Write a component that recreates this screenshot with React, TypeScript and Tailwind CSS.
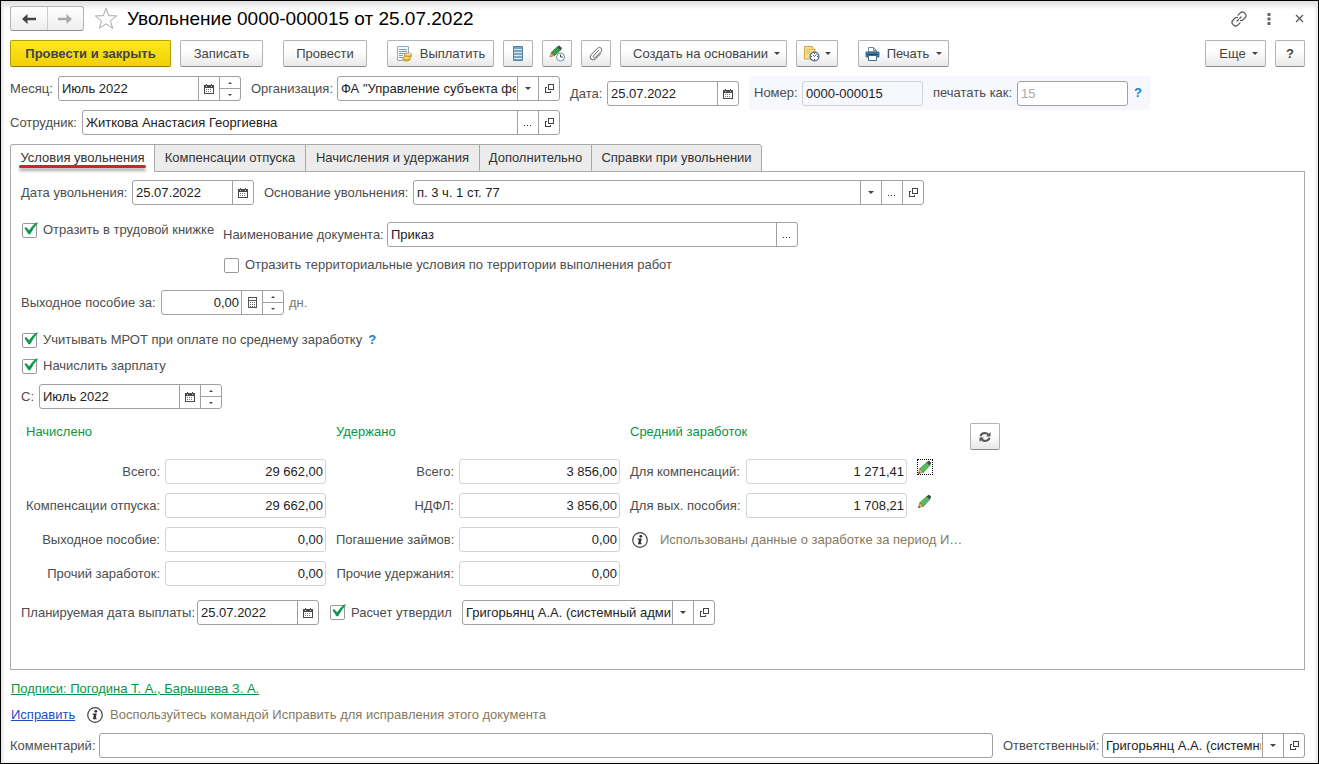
import React from "react";

type Addon = "calendar" | "calc" | "spin" | "drop" | "dots" | "open";

function CalendarIcon() {
  return (
    <svg width="10" height="10" viewBox="0 0 10 10" shapeRendering="crispEdges" aria-hidden="true">
      <path d="M0 1h10v9H0z M1 4v5h8V4z" fill="#4a4a4a" fillRule="evenodd" />
      <path d="M2 0h1v1H2zM7 0h1v1H7z" fill="#4a4a4a" />
      <path d="M2 2h1v1H2zM7 2h1v1H7z" fill="#ccc" />
      <path d="M2 5h1v1H2zM4 5h1v1H4zM6 5h1v1H6zM2 7h1v1H2zM4 7h1v1H4zM6 7h1v1H6z" fill="#777" />
    </svg>
  );
}

function CalcIcon() {
  return (
    <svg width="9" height="11" viewBox="0 0 9 11" shapeRendering="crispEdges" aria-hidden="true">
      <path d="M0 0h9v11H0z M1 1v2h7V1zM1 4v6h7V4z" fill="#555" fillRule="evenodd" />
      <path d="M2 5h1v1H2zM4 5h1v1H4zM6 5h1v1H6zM2 7h1v1H2zM4 7h1v1H4zM6 7h1v1H6zM2 9h1v1H2zM4 9h1v1H4zM6 9h1v1H6z" fill="#666" />
    </svg>
  );
}

function OpenIcon() {
  return (
    <svg width="9" height="9" viewBox="0 0 9 9" fill="none" stroke="#444" shapeRendering="crispEdges" aria-hidden="true">
      <path d="M3.500 0.500h5v5h-5z M2 3.500H0.500v5h5V7" />
    </svg>
  );
}

function Caret() {
  return (
    <svg width="6" height="3" viewBox="0 0 6 3" className="shrink-0" aria-hidden="true">
      <path d="M0 0h6L3 3z" fill="#444" />
    </svg>
  );
}

function PencilIcon() {
  return (
    <svg width="16" height="16" viewBox="0 0 16 16" aria-hidden="true">
      <path d="M1.500 14.500l1.200-4.800 3.700 3.700z" fill="#f2b455" stroke="#9a7433" strokeWidth=".6" />
      <path d="M1.300 14.700l.5-2 1.500 1.500z" fill="#333" />
      <path d="M2.700 9.700L10 3.200l3 3-6.600 7.200z" fill="#58bb60" stroke="#3c8a48" strokeWidth=".7" />
      <path d="M9.600 3.500l1.600-1.500q.7-.5 1.300 0l1.400 1.400q.6.700 0 1.300L12.600 6.500z" fill="#3d4c57" />
    </svg>
  );
}

function InfoIcon() {
  return (
    <svg width="16" height="16" viewBox="0 0 16 16" className="shrink-0" aria-hidden="true">
      <circle cx="8" cy="8" r="7.300" fill="#fff" stroke="#444" strokeWidth="1.200" />
      <circle cx="8.800" cy="4.300" r="1.400" fill="#333" />
      <path d="M5.800 6.600h3.900L8.700 11h1.100l-.4 1.200H5.900l1-4.400H5.600z" fill="#333" />
    </svg>
  );
}

function PayIcon() {
  return (
    <svg width="16" height="16" viewBox="0 0 16 16" className="shrink-0" aria-hidden="true">
      <path d="M1.500 .5h11v14h-11z" fill="#f3f8fc" stroke="#8fabc0" />
      <path d="M3 3.500h8M3 5.500h8M3 7.500h8M3 9.500h4M3 11.500h4" stroke="#7da0bd" />
      <path d="M8.500 8.500v2.300q3.500 2 7 0V8.500z" fill="#f2b632" stroke="#c28b1c" strokeWidth=".7" />
      <ellipse cx="12" cy="8.500" rx="3.500" ry="1.600" fill="#ffe07a" stroke="#c28b1c" strokeWidth=".7" />
      <path d="M7 12v2q3.500 2.500 7 0v-2z" fill="#f2b632" stroke="#c28b1c" strokeWidth=".7" />
      <ellipse cx="10.500" cy="12" rx="3.500" ry="1.600" fill="#ffe07a" stroke="#c28b1c" strokeWidth=".7" />
    </svg>
  );
}

function ListIcon() {
  return (
    <svg width="10" height="15" viewBox="0 0 10 15" aria-hidden="true">
      <path d="M.5.500h9v14h-9z" fill="#7aa5c5" stroke="#53809f" />
      <path d="M1 3.500h8M1 6.500h8M1 9.500h8M1 12.500h8" stroke="#d5e6f2" />
    </svg>
  );
}

function PencilClockIcon() {
  return (
    <svg width="18" height="17" viewBox="0 0 18 17" aria-hidden="true">
      <path d="M2 12l1.200-4.500 3.300 3z" fill="#f0a050" stroke="#8a5a30" strokeWidth=".5" />
      <path d="M3.200 7.500L9 2l3.500 3.300-6 5.200z" fill="#3d9a48" stroke="#2a7436" strokeWidth=".7" />
      <path d="M9 2l1.300-1.300q.6-.5 1.200 0l2.200 2q.5.600 0 1.200L12.500 5.300z" fill="#3d4c57" />
      <circle cx="12.500" cy="12" r="4" fill="#fff" stroke="#6d8fa3" />
      <path d="M12.500 9.500v2.500h2.300" fill="none" stroke="#444" />
    </svg>
  );
}

function ClipIcon() {
  return (
    <svg width="14" height="15" viewBox="0 0 14 15" fill="none" stroke="#666" strokeLinecap="round" aria-hidden="true">
      <path d="M9.800 4.200L4.700 9.500q-.9 1.100 0 1.900t1.900-.1l5.400-5.700q1.600-2 .1-3.500-1.700-1.500-3.500.1L2.300 8.500q-2.300 2.700-.4 4.600t4.600-.1l5.200-5.400" />
    </svg>
  );
}

function NoteClockIcon() {
  return (
    <svg width="17" height="17" viewBox="0 0 17 17" className="shrink-0" aria-hidden="true">
      <path d="M1.500 1.500h7.500l3 3v9.500H1.500z" fill="#f8df8c" stroke="#cfa548" />
      <path d="M9 1.500v3h3" fill="#fff4c9" stroke="#cfa548" />
      <path d="M3.500 4.500h4M3.500 6.500h4M3.500 8.500h3" stroke="#dcb75c" />
      <circle cx="11.500" cy="11.500" r="4.400" fill="#fff" stroke="#376a9a" strokeWidth="1.200" />
      <path d="M11.500 11.500l2.200-2.400M11.500 11.500L10 10" stroke="#333" strokeWidth=".8" />
      <path d="M11.500 8v1M11.500 14v1M8 11.500h1M14 11.500h1" stroke="#d22" strokeWidth="1.200" />
    </svg>
  );
}

function PrinterIcon() {
  return (
    <svg width="15" height="14" viewBox="0 0 15 14" className="shrink-0" aria-hidden="true">
      <path d="M3.500 5V.5h5l3 3V5z" fill="#fff" stroke="#6a879d" />
      <path d="M8.500 .5V3.500h3" fill="none" stroke="#6a879d" />
      <path d="M1.500 4.500h12q1 0 1 1v4q0 1-1 1h-12q-1 0-1-1v-4q0-1 1-1z" fill="#3f719b" />
      <path d="M2.500 7.500h10" stroke="#1f4869" />
      <path d="M3.500 8.500h8v5h-8z" fill="#fff" stroke="#3f6788" />
    </svg>
  );
}

const addonNames: Record<Addon, string> = {
  calendar: "Календарь",
  calc: "Калькулятор",
  spin: "Изменить",
  drop: "Выбрать из списка",
  dots: "Выбрать",
  open: "Открыть",
};

function AddonButton({ kind }: { kind: Addon }) {
  if (kind === "spin") {
    return (
      <span className="flex w-[21px] shrink-0 flex-col border-l border-[#a0a0a0]">
        <button type="button" aria-label="Больше" className="flex flex-1 items-center justify-center border-b border-[#a0a0a0]">
          <svg width="4" height="2" viewBox="0 0 4 2" aria-hidden="true"><path d="M0 2h4L2 0z" fill="#444" /></svg>
        </button>
        <button type="button" aria-label="Меньше" className="flex flex-1 items-center justify-center">
          <svg width="4" height="2" viewBox="0 0 4 2" aria-hidden="true"><path d="M0 0h4L2 2z" fill="#444" /></svg>
        </button>
      </span>
    );
  }
  return (
    <button type="button" aria-label={addonNames[kind]} className="flex w-[21px] shrink-0 items-center justify-center border-l border-[#a0a0a0]">
      {kind === "calendar" && <CalendarIcon />}
      {kind === "calc" && <CalcIcon />}
      {kind === "drop" && <Caret />}
      {kind === "open" && <OpenIcon />}
      {kind === "dots" && (
        <svg width="8" height="9" viewBox="0 0 8 9" shapeRendering="crispEdges" aria-hidden="true">
          <path d="M0 7h1v1H0zM3 7h1v1H3zM6 7h1v1H6z" fill="#333" />
        </svg>
      )}
    </button>
  );
}

function Field({ id, value, className = "", addons = [], right = false }: {
  id: string; value: string; className?: string; addons?: Addon[]; right?: boolean;
}) {
  return (
    <span className={`flex h-[25px] overflow-hidden rounded-[3px] border border-[#a0a0a0] bg-white ${className}`}>
      <input id={id} defaultValue={value} className={`min-w-0 flex-1 text-[#222] outline-none ${right ? "px-[2px] text-right" : "pr-px pl-[3px]"}`} />
      {addons.map((a) => <AddonButton key={a} kind={a} />)}
    </span>
  );
}

function Label({ htmlFor, className = "", children }: { htmlFor: string; className?: string; children: React.ReactNode }) {
  return <label htmlFor={htmlFor} className={`shrink-0 whitespace-nowrap ${className}`}>{children}</label>;
}

function Check({ id, checked = false, className = "", children }: { id: string; checked?: boolean; className?: string; children: React.ReactNode }) {
  return (
    <label htmlFor={id} className={`flex h-4 shrink-0 items-center gap-[6px] whitespace-nowrap ${className}`}>
      <span className="relative h-[15px] w-[15px] shrink-0">
        <input id={id} type="checkbox" defaultChecked={checked} className="peer block h-[15px] w-[15px] appearance-none rounded-[2px] border border-[#999] bg-white" />
        <svg width="17" height="14" viewBox="0 0 17 14" className="pointer-events-none absolute -top-px left-0 hidden peer-checked:block" aria-hidden="true">
          <path d="M2.500 6q1.200-1.200 2.500-.2l2 2.400Q10 4 13.500 1q1.300-.7 2.700-.4Q11.500 6 8.300 12q-1 .9-2 0z" fill="#0b9a50" />
        </svg>
      </span>
      {children}
    </label>
  );
}

function ToolButton({ className = "", label, children }: { className?: string; label?: string; children: React.ReactNode }) {
  return (
    <button type="button" aria-label={label} className={`flex h-[27px] shrink-0 items-center justify-center whitespace-nowrap rounded-[2px] border border-[#b3b3b3] border-b-[#8c8c8c] bg-linear-to-b from-white from-40% to-[#e8e8e8] text-[#444] ${className}`}>
      {children}
    </button>
  );
}

function Amount({ id, label, value, labelClass }: { id: string; label: string; value: string; labelClass: string }) {
  return (
    <div className="flex h-[25px] items-center">
      <Label htmlFor={id} className={labelClass}>{label}</Label>
      <input id={id} readOnly value={value} className="h-[25px] w-[161px] shrink-0 rounded-[3px] border border-[#d3d3d3] bg-white px-[2px] text-right text-[#222] outline-none" />
    </div>
  );
}

const accrued = [
  ["Всего:", "29 662,00"],
  ["Компенсации отпуска:", "29 662,00"],
  ["Выходное пособие:", "0,00"],
  ["Прочий заработок:", "0,00"],
];
const withheld = [
  ["Всего:", "3 856,00"],
  ["НДФЛ:", "3 856,00"],
  ["Погашение займов:", "0,00"],
  ["Прочие удержания:", "0,00"],
];
const average = [
  ["Для компенсаций:", "1 271,41"],
  ["Для вых. пособия:", "1 708,21"],
];
const tabs = [
  { text: "Условия увольнения", width: "w-[145px]" },
  { text: "Компенсации отпуска", width: "w-[152px]" },
  { text: "Начисления и удержания", width: "w-[175px]" },
  { text: "Дополнительно", width: "w-[113px]" },
  { text: "Справки при увольнении", width: "w-[171px]" },
];

export default function App() {
  return (
    <main className="flex min-h-screen flex-col border border-black bg-white px-[9px] pt-[5px] pb-1 font-['Liberation_Sans',Arial,sans-serif] text-[13px] leading-4 text-[#4d4d4d] shadow-[inset_0_5px_5px_#e2e2e2,inset_-2px_0_3px_#eee,inset_2px_0_3px_#eee]">
      <header className="flex h-[25px] items-center">
        <div className="flex h-[25px] w-[74px] shrink-0 rounded-[3px] border border-[#b3b3b3] border-b-[#8c8c8c] bg-linear-to-b from-white to-[#eee]">
          <button type="button" aria-label="Назад" className="flex flex-1 items-center justify-center border-r border-[#ccc]">
            <svg width="14" height="10" viewBox="0 0 14 10" aria-hidden="true"><path d="M0 5L5.500 0V3.800H14v2.400H5.500V10z" fill="#444" /></svg>
          </button>
          <button type="button" aria-label="Вперед" className="flex flex-1 items-center justify-center">
            <svg width="14" height="10" viewBox="0 0 14 10" aria-hidden="true"><path d="M14 5L8.500 0V3.800H0v2.400h8.500V10z" fill="#aaa" /></svg>
          </button>
        </div>
        <button type="button" aria-label="В избранное" className="ml-[10px]">
          <svg width="24" height="23" viewBox="0 0 24 23" aria-hidden="true">
            <path d="M12 1.500l2.700 7.200 8 .2-6.300 4.900 2.300 7.500L12 16.800l-6.700 4.500 2.300-7.500L1.300 8.900l8-.2z" fill="#fff" stroke="#a8a8a8" />
          </svg>
        </button>
        <h1 className="ml-[9px] text-[19px] leading-6 whitespace-nowrap text-black">Увольнение 0000-000015 от 25.07.2022</h1>
        <div className="mr-[5px] ml-auto flex items-center text-[#555]">
          <button type="button" aria-label="Ссылка">
            <svg width="16" height="16" viewBox="0 0 16 16" fill="none" stroke="#555" strokeWidth="1.200" strokeLinecap="round" aria-hidden="true">
              <path d="M7 4.200L9.500 1.700q1.800-1.600 3.700 0l1.100 1.100q1.600 1.900 0 3.700L12 8.800q-1.200 1-2.600.7M9 11.800l-2.500 2.500q-1.800 1.600-3.700 0L1.700 13.200q-1.600-1.900 0-3.700L4 7.200q1.200-1 2.600-.7M6 10l1.500-1.500M8.700 7.300L10 6" />
            </svg>
          </button>
          <button type="button" aria-label="Меню" className="ml-5">
            <svg width="4" height="12" viewBox="0 0 4 12" aria-hidden="true">
              <path d="M.5 0h3v3h-3zM.5 4.500h3v3h-3zM.5 9h3v3h-3z" fill="#666" />
            </svg>
          </button>
          <button type="button" aria-label="Закрыть" className="ml-6">
            <svg width="9" height="9" viewBox="0 0 9 9" aria-hidden="true"><path d="M1 1l7 7M8 1L1 8" stroke="#555" strokeWidth="1.200" /></svg>
          </button>
        </div>
      </header>

      <div className="mt-[9px] flex">
        <button type="button" className="h-[27px] w-[161px] shrink-0 rounded-[2px] border border-[#b39b00] border-b-[#8f7c00] bg-linear-to-b from-[#ffe81f] to-[#f0d000] font-bold whitespace-nowrap text-[#444]">
          Провести и закрыть
        </button>
        <ToolButton className="ml-[9px] w-[83px]">Записать</ToolButton>
        <ToolButton className="ml-5 w-[84px]">Провести</ToolButton>
        <ToolButton className="ml-5 w-[107px] gap-2"><PayIcon />Выплатить</ToolButton>
        <ToolButton className="ml-[9px] w-[30px]" label="Список"><ListIcon /></ToolButton>
        <ToolButton className="ml-[9px] w-[30px]" label="История изменений"><PencilClockIcon /></ToolButton>
        <ToolButton className="ml-[9px] w-[30px]" label="Файлы"><ClipIcon /></ToolButton>
        <ToolButton className="ml-[9px] w-[167px] gap-[6px] pl-[6px]">Создать на основании<Caret /></ToolButton>
        <ToolButton className="ml-[9px] w-[42px] gap-[5px]" label="Отчеты"><NoteClockIcon /><Caret /></ToolButton>
        <ToolButton className="ml-5 w-[91px] gap-[7px]"><PrinterIcon />Печать<Caret /></ToolButton>
        <ToolButton className="mr-[9px] ml-auto w-[61px] gap-[6px] pl-[6px]">Еще<Caret /></ToolButton>
        <ToolButton className="mr-1 w-[30px] font-bold text-[#222]">?</ToolButton>
      </div>

      <div className="mt-[9px] flex h-[34px] items-start">
        <div className="flex items-center">
          <Label htmlFor="month" className="w-12">Месяц:</Label>
          <Field id="month" value="Июль 2022" className="w-[183px]" addons={["calendar", "spin"]} />
          <Label htmlFor="org" className="ml-[10px] w-[86px]">Организация:</Label>
          <Field id="org" value={'ФА "Управление субъекта федерации"'} className="w-[223px]" addons={["drop", "open"]} />
        </div>
        <div className="mt-[5px] ml-[10px] flex items-center">
          <Label htmlFor="date" className="w-[37px]">Дата:</Label>
          <Field id="date" value="25.07.2022" className="w-[132px]" addons={["calendar"]} />
        </div>
        <div className="ml-[10px] flex h-[34px] items-center bg-[#f7f8fe] pr-2 pl-[5px]">
          <Label htmlFor="number" className="w-12">Номер:</Label>
          <input id="number" readOnly value="0000-000015" className="h-[25px] w-[121px] rounded-[3px] border border-[#d3d3d3] px-[3px] text-[#222] outline-none" />
          <Label htmlFor="print-as" className="ml-[10px] w-[84px]">печатать как:</Label>
          <input id="print-as" placeholder="15" className="h-[25px] w-[111px] rounded-[3px] border border-[#a0a0a0] bg-white px-[3px] outline-none placeholder:text-[#aaa]" />
          <button type="button" className="ml-[6px] font-bold text-[#1a80c4]">?</button>
        </div>
      </div>

      <div className="flex items-center">
        <Label htmlFor="employee" className="w-[72px]">Сотрудник:</Label>
        <Field id="employee" value="Житкова Анастасия Георгиевна" className="w-[478px]" addons={["dots", "open"]} />
      </div>

      <div role="tablist" className="z-10 mt-[9px] flex">
        {tabs.map((tab, i) => (
          <button
            key={tab.text}
            type="button"
            role="tab"
            aria-selected={i === 0}
            className={`relative -mb-px h-7 shrink-0 border border-[#a9a9a9] whitespace-nowrap text-[#333] ${tab.width} ${i === 0 ? "rounded-tl-[3px] border-b-white bg-white" : "-ml-px bg-[#ececec]"} ${i === 4 ? "rounded-tr-[3px]" : ""}`}
          >
            {tab.text}
            {i === 0 && <span className="absolute inset-x-2 bottom-[3px] h-[3px] rounded-full bg-[#d6202c] shadow-[0_3px_3px_#aaa]" />}
          </button>
        ))}
      </div>

      <section role="tabpanel" className="mr-1 border border-[#a9a9a9] px-[10px] pt-2 pb-11">
        <div className="flex items-center">
          <Label htmlFor="fire-date" className="w-[111px]">Дата увольнения:</Label>
          <Field id="fire-date" value="25.07.2022" className="w-[122px]" addons={["calendar"]} />
          <Label htmlFor="reason" className="ml-[10px] w-[149px]">Основание увольнения:</Label>
          <Field id="reason" value="п. 3 ч. 1 ст. 77" className="w-[511px]" addons={["drop", "dots", "open"]} />
        </div>

        <div className="mt-[17px] flex items-start">
          <Check id="book" checked className="ml-px w-[201px]">Отразить в трудовой книжке</Check>
          <div className="flex flex-col gap-[10px]">
            <div className="flex items-center">
              <Label htmlFor="doc-name" className="w-[164px]">Наименование документа:</Label>
              <Field id="doc-name" value="Приказ" className="w-[411px]" addons={["dots"]} />
            </div>
            <Check id="territory" className="ml-px">Отразить территориальные условия по территории выполнения работ</Check>
          </div>
        </div>

        <div className="mt-[17px] flex items-center">
          <Label htmlFor="severance" className="w-[140px]">Выходное пособие за:</Label>
          <Field id="severance" value="0,00" className="w-[123px]" addons={["calc", "spin"]} right />
          <span className="ml-[5px] text-[#777]">дн.</span>
        </div>

        <div className="mt-[17px] flex flex-col gap-[10px]">
          <div className="flex h-4 items-center gap-[6px]">
            <Check id="mrot" checked className="ml-px">Учитывать МРОТ при оплате по среднему заработку</Check>
            <button type="button" className="font-bold text-[#1a80c4]">?</button>
          </div>
          <Check id="salary" checked className="ml-px">Начислить зарплату</Check>
          <div className="flex items-center">
            <Label htmlFor="from" className="w-[18px]">С:</Label>
            <Field id="from" value="Июль 2022" className="w-[183px]" addons={["calendar", "spin"]} />
          </div>
        </div>

        <div className="mt-[14px] ml-[5px] flex items-start gap-[10px]">
          <div className="flex w-[300px] shrink-0 flex-col gap-[9px]">
            <h2 className="h-[27px] pt-px text-[#0b9444]">Начислено</h2>
            {accrued.map(([label, value], i) => (
              <Amount key={label} id={`accrued-${i}`} label={label} value={value} labelClass="w-[139px] pr-[5px] text-right" />
            ))}
          </div>
          <div className="flex w-[284px] shrink-0 flex-col gap-[9px]">
            <h2 className="h-[27px] pt-px text-[#0b9444]">Удержано</h2>
            {withheld.map(([label, value], i) => (
              <Amount key={label} id={`withheld-${i}`} label={label} value={value} labelClass="w-[123px] pr-[5px] text-right" />
            ))}
          </div>
          <div className="flex w-[330px] shrink-0 flex-col gap-[9px]">
            <h2 className="h-[27px] pt-px text-[#0b9444]">Средний заработок</h2>
            {average.map(([label, value], i) => (
              <div key={label} className="flex items-start gap-[10px]">
                <Amount id={`average-${i}`} label={label} value={value} labelClass="w-[116px]" />
                <button type="button" aria-label="Изменить" className={i === 0 ? "outline-1 -outline-offset-1 outline-dotted outline-black" : ""}>
                  <PencilIcon />
                </button>
              </div>
            ))}
            <div className="flex h-[25px] items-center gap-3 pl-[2px] text-[#857a5e]">
              <InfoIcon />
              <span className="whitespace-nowrap">Использованы данные о заработке за период И…</span>
            </div>
          </div>
          <ToolButton className="w-[30px]" label="Обновить">
            <svg width="12" height="12" viewBox="0 0 12 12" aria-hidden="true">
              <path d="M1.500 5.200q.8-3 4.300-3.200 2 0 3.300 1.500M10.500 6.800q-.8 3-4.300 3.200-2 0-3.300-1.500" fill="none" stroke="#555" strokeWidth="2" />
              <path d="M11.500 1V5.400H7zM.5 11V6.600H5z" fill="#555" />
            </svg>
          </ToolButton>
        </div>

        <div className="mt-[14px] flex items-center">
          <Label htmlFor="pay-date" className="w-[176px]">Планируемая дата выплаты:</Label>
          <Field id="pay-date" value="25.07.2022" className="w-[122px]" addons={["calendar"]} />
          <Check id="approved" checked className="ml-[11px] w-[132px]">Расчет утвердил</Check>
          <Field id="approver" value="Григорьянц А.А. (системный администратор)" className="w-[253px]" addons={["drop", "open"]} />
        </div>
      </section>

      <div className="mt-[11px] flex pl-px">
        <a href="#signatures" className="text-[#0b9444] underline">Подписи: Погодина Т. А., Барышева З. А.</a>
      </div>
      <div className="mt-[10px] flex h-4 items-center pl-px">
        <a href="#correct" className="w-[76px] text-[#1d4fc4] underline">Исправить</a>
        <InfoIcon />
        <span className="ml-[7px] text-[#857a5e]">Воспользуйтесь командой Исправить для исправления этого документа</span>
      </div>
      <div className="mt-[10px] mr-1 flex items-center">
        <Label htmlFor="comment" className="w-[89px]">Комментарий:</Label>
        <Field id="comment" value="" className="min-w-0 flex-1" />
        <Label htmlFor="responsible" className="ml-[10px] w-[99px]">Ответственный:</Label>
        <Field id="responsible" value="Григорьянц А.А. (системный администратор)" className="w-[203px]" addons={["drop", "open"]} />
      </div>
    </main>
  );
}
